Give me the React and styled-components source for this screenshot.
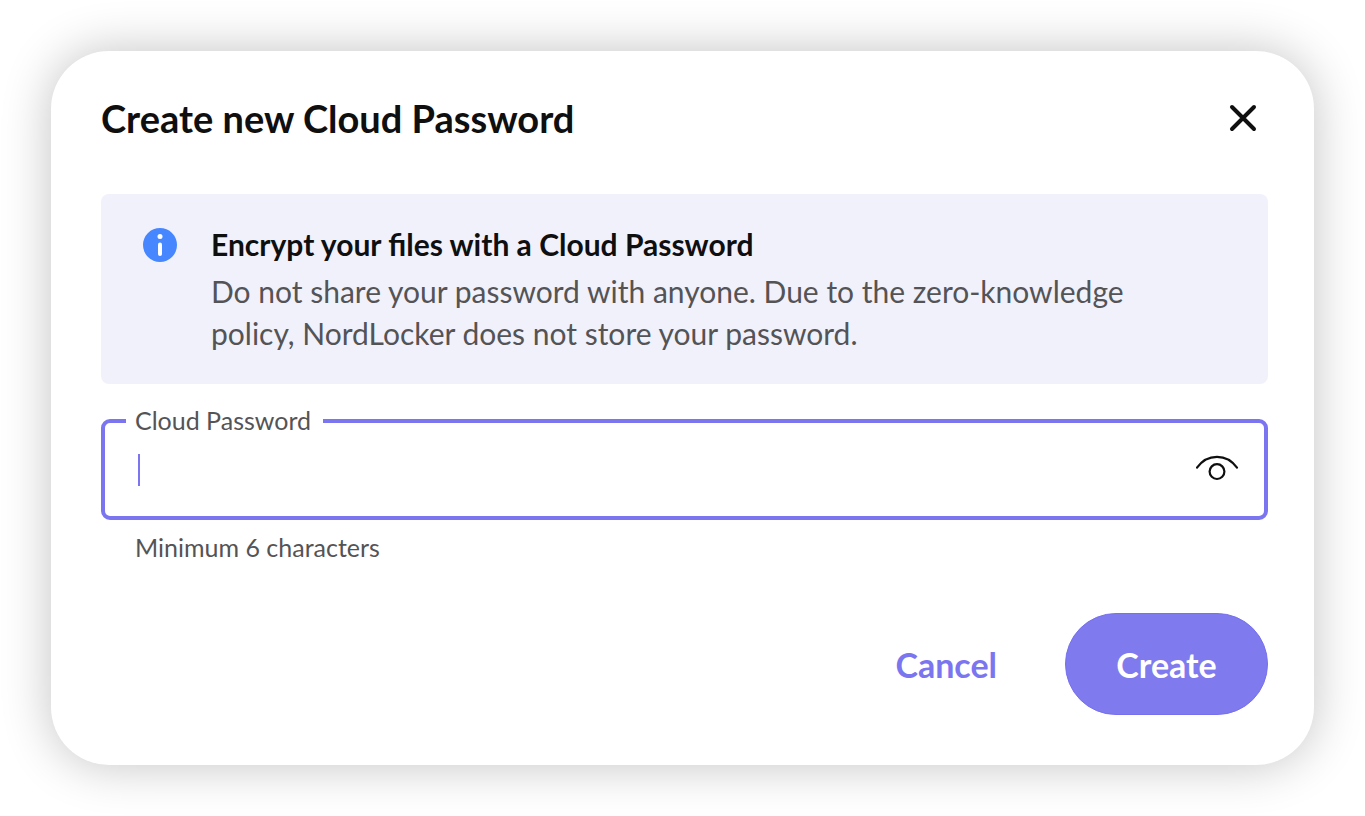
import React, { useState } from "react";
import styled, { createGlobalStyle } from "styled-components";

const GlobalStyle = createGlobalStyle`
  * {
    box-sizing: border-box;
  }
  body {
    margin: 0;
    background: #fff;
    color: #0f0f10;
    font-family: Lato, "Open Sans", sans-serif;
  }
`;
const Page = styled.main`
  min-height: 100vh;
  padding: 51px;
`;
const Dialog = styled.form`
  padding: 43px 46px 50px 50px;
  border-radius: 58px;
  background: #fff;
  box-shadow: 0 0 50px rgba(0, 0, 0, 0.24);
`;
const Header = styled.header`
  display: flex;
  justify-content: space-between;
  align-items: center;
  padding-right: 11px;
`;
const Title = styled.h1`
  margin: 0;
  font-size: 38px;
  line-height: 48px;
  font-weight: 700;
`;
const IconButton = styled.button`
  display: flex;
  padding: 0;
  border: 0;
  background: none;
  color: #0f0f10;
  cursor: pointer;
`;
const Notice = styled.section`
  display: flex;
  gap: 34px;
  margin-top: 52px;
  padding: 29px 42px 30px;
  border-radius: 8px;
  background: #f1f1fc;
`;
const NoticeIcon = styled.svg`
  flex: none;
  margin-top: 5px;
`;
const NoticeTitle = styled.h2`
  margin: 0 0 5px;
  font-size: 30px;
  line-height: 42px;
  font-weight: 700;
`;
const NoticeText = styled.p`
  max-width: 940px;
  margin: 0;
  font-size: 30px;
  line-height: 42px;
  color: #545456;
`;
const Field = styled.fieldset`
  display: flex;
  align-items: center;
  min-width: 0;
  margin: 21px 0 0;
  padding: 0 25px 14px 33px;
  border: 4px solid #7b75f0;
  border-radius: 9px;
`;
const Legend = styled.legend`
  margin-left: -12px;
  padding: 0 12px 2px 9px;
  font-size: 25px;
  line-height: 30px;
  color: #545456;
`;
const Caret = styled.span`
  width: 2px;
  height: 32px;
  background: #7b75f0;
`;
const Input = styled.input`
  flex: 1;
  min-width: 0;
  height: 65px;
  padding: 0;
  border: 0;
  outline: 0;
  background: none;
  font: inherit;
  font-size: 30px;
  caret-color: #7b75f0;
`;
const Hint = styled.p`
  margin: 11px 0 0 34px;
  font-size: 25px;
  line-height: 32px;
  color: #545456;
`;
const Actions = styled.footer`
  display: flex;
  justify-content: flex-end;
  gap: 17px;
  margin-top: 50px;
`;
const Button = styled.button`
  min-width: 203px;
  height: 102px;
  padding: 0 50px;
  border: 1px solid ${(p) => (p.$primary ? "#7670ee" : "transparent")};
  border-radius: 51px;
  background: ${(p) => (p.$primary ? "#7f7aee" : "none")};
  color: ${(p) => (p.$primary ? "#fff" : "#7b75f0")};
  font-family: inherit;
  font-size: 34px;
  font-weight: 700;
  cursor: pointer;
`;

const App = () => {
  const [password, setPassword] = useState("");
  const [visible, setVisible] = useState(false);

  return (
    <>
      <GlobalStyle />
      <Page>
        <Dialog onSubmit={(e) => e.preventDefault()}>
          <Header>
            <Title>Create new Cloud Password</Title>
            <IconButton type="button" aria-label="Close">
              <svg width="28" height="28" viewBox="0 0 28 28" fill="none">
                <path
                  d="M3 3L25 25M25 3L3 25"
                  stroke="currentColor"
                  strokeWidth="4"
                  strokeLinecap="round"
                />
              </svg>
            </IconButton>
          </Header>
          <Notice>
            <NoticeIcon width="34" height="34" viewBox="0 0 34 34">
              <circle cx="17" cy="17" r="17" fill="#4687ff" />
              <circle cx="17" cy="8.6" r="2.5" fill="#fff" />
              <rect x="15" y="14.6" width="4" height="13.4" rx="2" fill="#fff" />
            </NoticeIcon>
            <div>
              <NoticeTitle>Encrypt your files with a Cloud Password</NoticeTitle>
              <NoticeText>
                Do not share your password with anyone. Due to the
                zero-knowledge policy, NordLocker does not store your password.
              </NoticeText>
            </div>
          </Notice>
          <Field>
            <Legend>
              <label htmlFor="password">Cloud Password</label>
            </Legend>
            {!password && <Caret />}
            <Input
              id="password"
              type={visible ? "text" : "password"}
              aria-describedby="password-hint"
              value={password}
              onChange={(e) => setPassword(e.target.value)}
            />
            <IconButton
              type="button"
              aria-label="Show password"
              onClick={() => setVisible(!visible)}
            >
              <svg width="44" height="30" viewBox="0 0 44 30" fill="none">
                <path
                  d="M2 12.7C7 5.6 14 1.8 22 1.8S37 5.6 42 12.7"
                  stroke="currentColor"
                  strokeWidth="2.2"
                  strokeLinecap="round"
                />
                <circle
                  cx="22"
                  cy="16.6"
                  r="7.4"
                  stroke="currentColor"
                  strokeWidth="2.2"
                />
              </svg>
            </IconButton>
          </Field>
          <Hint id="password-hint">Minimum 6 characters</Hint>
          <Actions>
            <Button type="button">Cancel</Button>
            <Button type="submit" $primary>
              Create
            </Button>
          </Actions>
        </Dialog>
      </Page>
    </>
  );
};
export default App;
